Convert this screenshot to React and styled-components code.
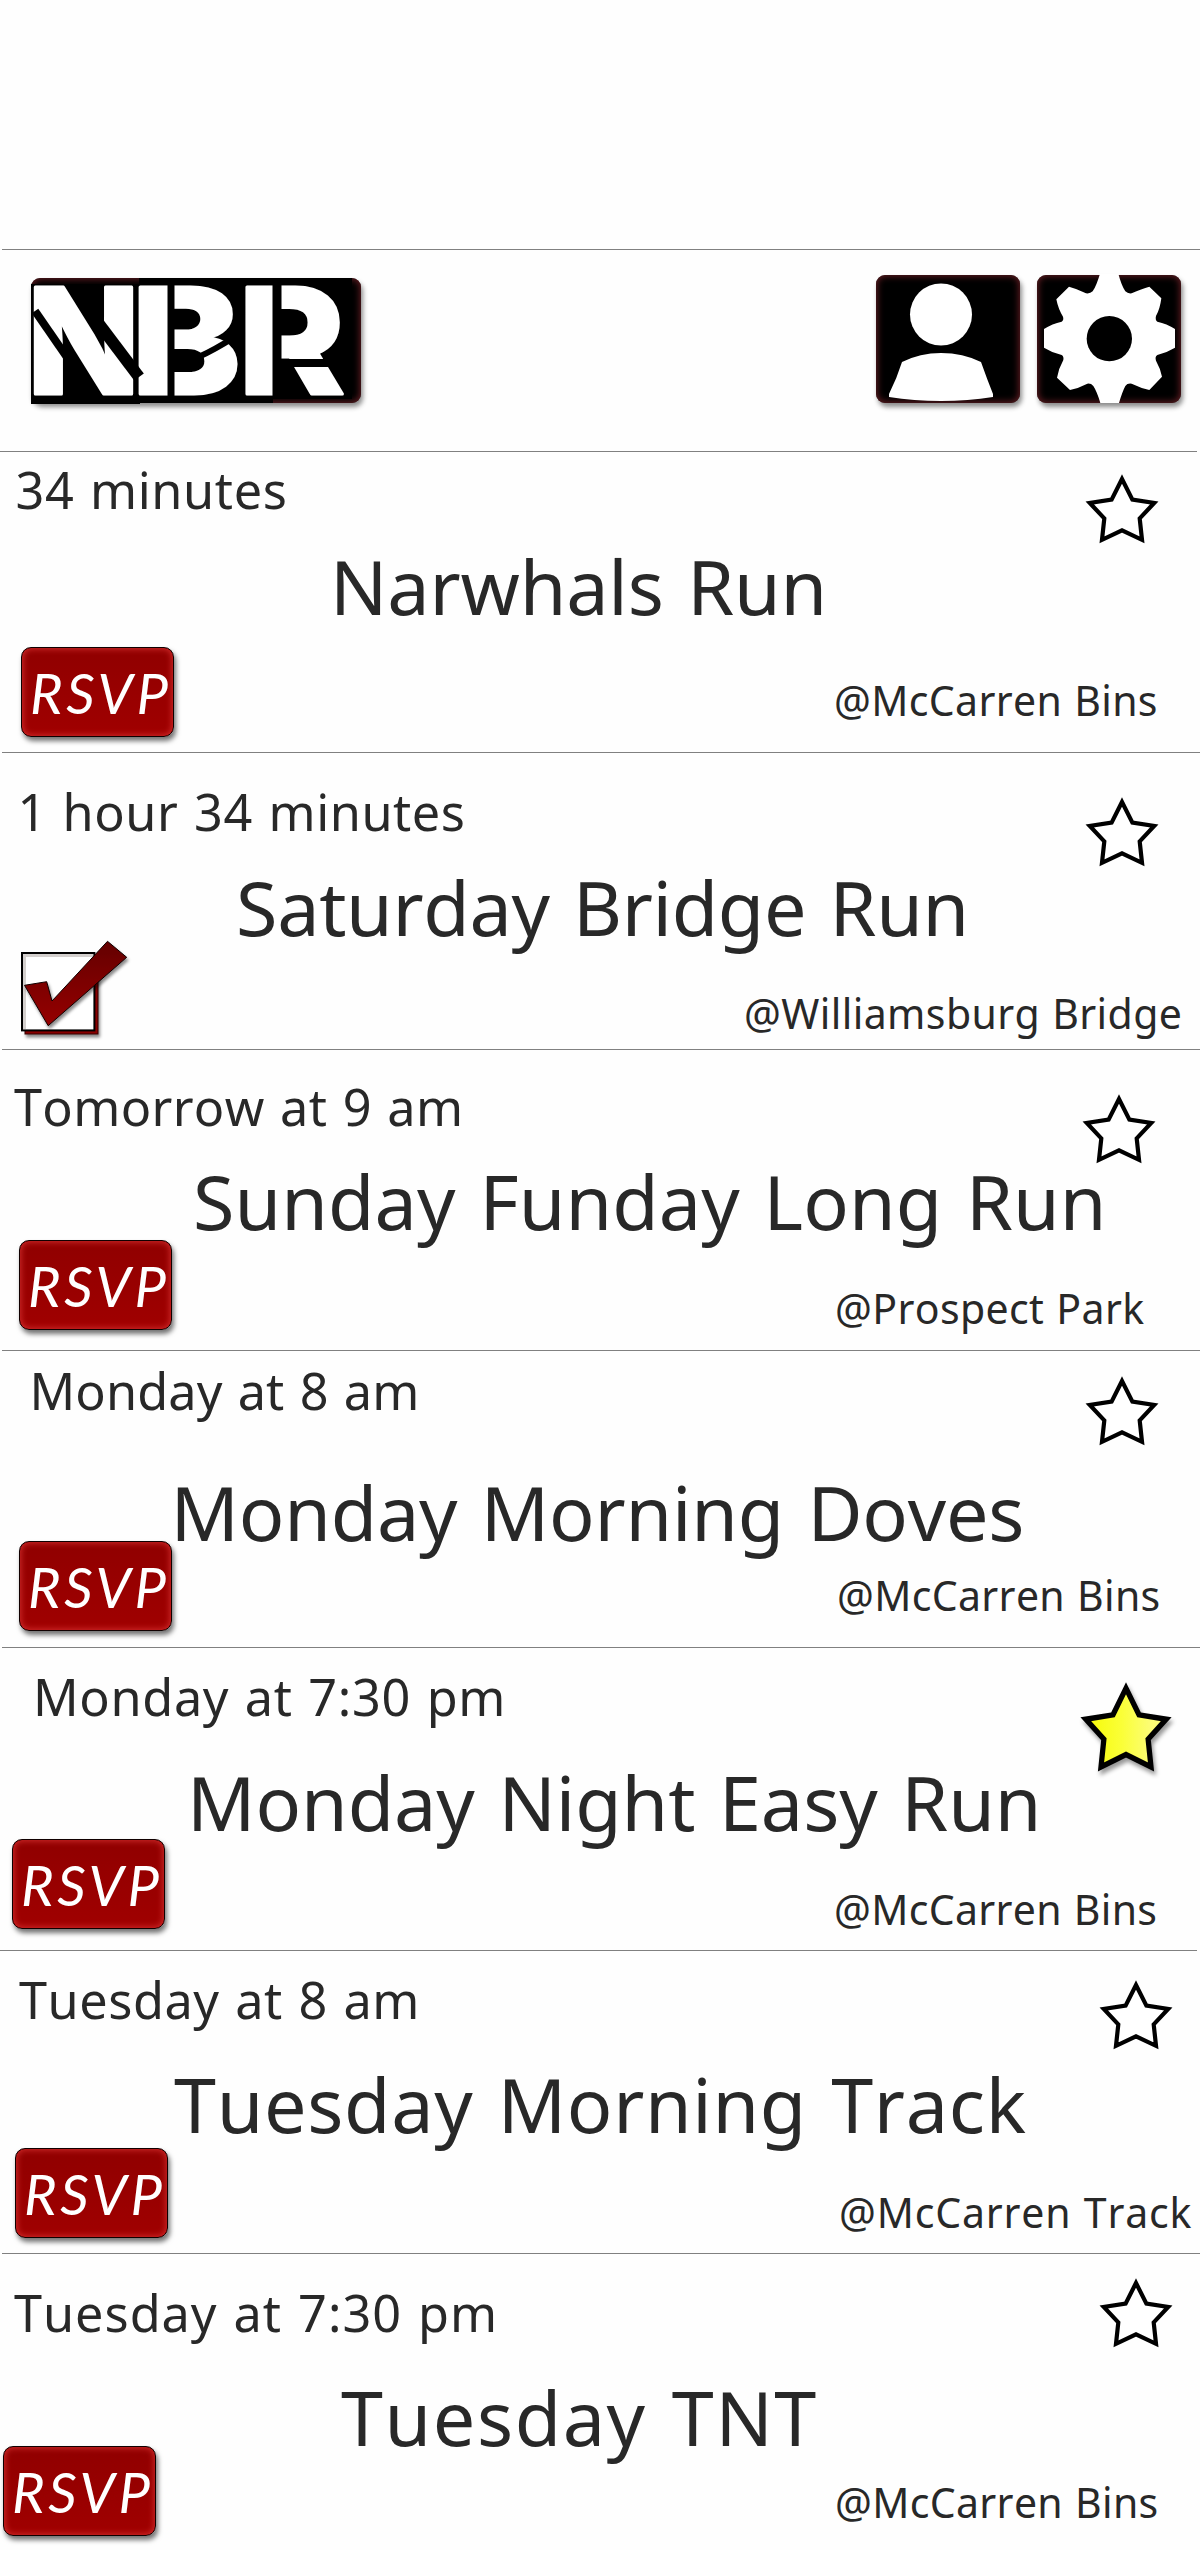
import React from "react";
import styled, { createGlobalStyle, css } from "styled-components";

const GlobalStyle = createGlobalStyle`
  body {
    margin: 0;
    background: #fefefe;
  }
`;

const ink = "#282828";

const Screen = styled.main`
  display: flex;
  flex-direction: column;
  width: 1200px;
  height: 2550px;
  overflow: hidden;
  background: #fefefe;
  color: ${ink};
  font-family: "Noto Sans", "Open Sans", sans-serif;
  font-kerning: none;
`;

const StatusSpace = styled.div`
  flex: none;
  height: 249px;
`;

const Rule = styled.hr`
  flex: none;
  width: auto;
  height: 1px;
  margin: 0 ${(p) => (p.$flush ? "3px 0 0" : "0 0 2px")};
  border: 0;
  background: #808080;
`;

const TopBar = styled.header`
  display: flex;
  flex: none;
  align-items: flex-start;
  justify-content: space-between;
  height: 201px;
  box-sizing: border-box;
  padding: 25px 19px 0 31px;
`;

const glow = css`
  box-shadow:
    inset 0 0 7px 1px #6a1f25,
    2px 4px 5px rgba(0, 0, 0, 0.45);
`;

const LogoTile = styled.div`
  width: 330px;
  height: 125px;
  margin-top: 3px;
  border-radius: 9px;
  background: #000;
  ${glow}

  svg {
    display: block;
    overflow: visible;
  }
`;

const TopActions = styled.nav`
  display: flex;
  gap: 17px;
`;

const IconTile = styled.button`
  width: 144px;
  height: 128px;
  padding: 0;
  border: 0;
  border-radius: 9px;
  background: #000;
  ${glow}

  svg {
    display: block;
    overflow: visible;
  }
`;

const EventList = styled.section`
  display: flex;
  flex-direction: column;
`;

const EventRow = styled.article`
  display: flex;
  flex: none;
  flex-direction: column;
  height: ${(p) => p.$height}px;
`;

const EventHead = styled.div`
  display: flex;
  flex: none;
  align-items: flex-start;
  justify-content: space-between;
  box-sizing: border-box;
  height: ${(p) => p.$height}px;
  padding-right: ${(p) => p.$right}px;
`;

const When = styled.time`
  margin: ${(p) => p.$top}px 0 0 ${(p) => p.$left}px;
  font-size: 50.4px;
  line-height: 60px;
  letter-spacing: ${(p) => p.$tracking}px;
  word-spacing: 2px;
  white-space: nowrap;
`;

const Favorite = styled.button`
  flex: none;
  margin: ${(p) => p.$top}px 0 0;
  padding: 0;
  border: 0;
  background: none;

  svg {
    display: block;
    overflow: visible;
    ${(p) => p.$filled && "filter: drop-shadow(2px 4px 2px rgba(0, 0, 0, 0.4));"}
  }
`;

const Title = styled.h2`
  flex: none;
  height: 60px;
  margin: 0;
  padding-left: ${(p) => p.$left}px;
  font-size: 75.5px;
  font-weight: 400;
  line-height: 60px;
  letter-spacing: ${(p) => p.$tracking}px;
  word-spacing: 4px;
  white-space: nowrap;
`;

const EventFoot = styled.div`
  display: grid;
  flex: 1;
  grid-template-columns: ${(p) => p.$split}px 1fr;
  align-items: start;
`;

const ActionSlot = styled.div`
  display: flex;
  margin: ${(p) => p.$top}px 0 0 ${(p) => p.$left}px;
`;

const Place = styled.p`
  margin: ${(p) => p.$top}px 0 0;
  font-size: 41px;
  line-height: 50px;
  letter-spacing: ${(p) => p.$tracking}px;
  word-spacing: 1px;
  white-space: nowrap;
`;

const RsvpButton = styled.button`
  width: 153px;
  height: 90px;
  box-sizing: border-box;
  padding: 2px 0 0 8px;
  border: 1px solid #100000;
  border-radius: 10px;
  background: linear-gradient(#900000, #a00000);
  box-shadow:
    inset 0 0 6px 1px #d22c2c,
    2px 4px 5px rgba(0, 0, 0, 0.55);
  color: #fff;
  font-family: "Lucida Calligraphy", Lato, sans-serif;
  font-size: 56px;
  font-style: italic;
  line-height: 84px;
  letter-spacing: 3.6px;
  text-align: left;
  white-space: nowrap;
`;

const CheckBox = styled.button`
  padding: 0;
  border: 0;
  background: none;

  svg {
    display: block;
    overflow: visible;
  }
`;

function Logo() {
  const letter = {
    y: 116,
    fill: "#fff",
    stroke: "#fff",
    strokeWidth: 3,
    strokeLinejoin: "round",
    fontFamily: "Inter, sans-serif",
    fontWeight: 800,
    fontSize: 147,
    lengthAdjust: "spacingAndGlyphs",
  };
  return (
    <LogoTile aria-label="NBR">
      <svg width="330" height="126" viewBox="0 0 330 126">
        <rect y="6" width="109" height="120" />
        <rect x="108" width="134" height="125" />
        <rect x="240" width="81" height="121" />
        <text {...letter} x="-4" textLength="113">N</text>
        <text {...letter} x="100" textLength="110">B</text>
        <text {...letter} x="207" textLength="107">R</text>
        <g stroke="#000" fill="none">
          <path d="M4 33 L42 88" strokeWidth="8" />
          <path d="M62 38 L108 99" strokeWidth="12" />
          <path d="M140 2 V124" strokeWidth="7" />
          <path d="M246 2 V120" strokeWidth="9" />
          <path d="M144 86 Q164 84 202 60" strokeWidth="6" />
          <path d="M244 85 H316" strokeWidth="8" />
        </g>
      </svg>
    </LogoTile>
  );
}

function PersonIcon() {
  return (
    <svg width="144" height="128" viewBox="0 0 144 128" fill="#fff">
      <circle cx="65" cy="39.5" r="31" />
      <path d="M26 87 Q44 78 65 78 Q87 78 105 87 Q111 104 117 119 V122 Q92 126 65 126 Q38 126 13 122 V119 Q21 103 26 87Z" />
    </svg>
  );
}

function GearIcon() {
  return (
    <svg width="144" height="128" viewBox="561 135 432 384">
      <path
        fill="#fff"
        d="M750 131 H805 Q814 165 826 184 Q834 192 845 190 Q875 176 898 170 L934 205 Q930 237 918 258 Q915 270 922 275 Q950 281 975 297 V353 Q950 368 922 375 Q914 380 918 392 Q931 415 936 440 L898 480 Q872 474 845 461 Q832 459 826 468 Q817 485 807 519 H751 Q741 485 730 468 Q722 459 712 461 Q685 475 660 480 L621 443 Q626 415 640 390 Q642 379 635 375 Q608 369 582 353 V297 Q607 281 635 275 Q642 270 639 260 Q625 238 619 208 L657 170 Q681 176 708 190 Q720 192 728 184 Q739 168 750 131Z"
      />
      <circle cx="778" cy="326" r="68" />
    </svg>
  );
}

const STAR =
  "M36 4 L46.4 24.6 L68.2 28 L53.7 43.4 L56 64.8 L36 55.3 L16 64.8 L18.3 43.4 L3.8 28 L25.6 24.6Z";

function Star({ filled }) {
  return (
    <svg width={filled ? 90 : 72} height={filled ? 88 : 68} viewBox="0 0 72 68" preserveAspectRatio="none">
      <defs>
        <linearGradient id="starFill">
          <stop offset="0.1" stopColor="#f7fb10" />
          <stop offset="0.45" stopColor="#faff38" />
          <stop offset="0.8" stopColor="#fcfd74" />
        </linearGradient>
      </defs>
      <path d={STAR} fill={filled ? "url(#starFill)" : "#fff"} stroke="#000" strokeWidth="4.2" strokeMiterlimit="10" />
    </svg>
  );
}

function CheckIcon() {
  return (
    <svg width="108" height="96" viewBox="0 0 108 96">
      <defs>
        <linearGradient id="checkFill" x2="0" y2="1">
          <stop stopColor="#640000" />
          <stop offset="1" stopColor="#960000" />
        </linearGradient>
        <filter id="checkShadow" x="-20%" y="-20%" width="150%" height="150%">
          <feDropShadow dx="1.5" dy="3" stdDeviation="1.5" floodOpacity="0.45" />
        </filter>
      </defs>
      <rect x="4" y="14.5" width="73" height="78.5" fill="#880000" stroke="#300" strokeWidth="1" filter="url(#checkShadow)" />
      <rect x="1" y="12" width="72.4" height="77.4" fill="#fff" stroke="#000" strokeWidth="2" />
      <path d="M3.5 88 V14.5 H72" fill="none" stroke="#d3cfcd" strokeWidth="3" />
      <path
        d="M3.5 44.3 L25.7 40.7 L31 60 L86.5 0.3 L105.7 16.3 L27.2 84.7Z"
        fill="url(#checkFill)"
        stroke="#100000"
        strokeWidth="1"
        filter="url(#checkShadow)"
      />
    </svg>
  );
}

// when: text, left, top, tracking. title: text, left, tracking. place: text, left, top, tracking.
// star: right, top. action: left, top.
const EVENTS = [
  { height: 300, head: 104, when: ["34 minutes", 15.5, 8.4, 0.6], star: [42, 23], title: ["Narwhals Run", 330, -0.15], action: [21, 31], place: ["@McCarren Bins", 834, 59, 0.36] },
  { height: 296, head: 124, when: ["1 hour 34 minutes", 17.5, 29.4, 0.56], star: [42, 45], title: ["Saturday Bridge Run", 236, -0.32], going: true, action: [21, 4], place: ["@Williamsburg Bridge", 744, 51, 0.4] },
  { height: 300, head: 121, when: ["Tomorrow at 9 am", 14, 27.4, 0.35], star: [45, 45], title: ["Sunday Funday Long Run", 193, 0.1], action: [19, 9], place: ["@Prospect Park", 835, 52, 0.38] },
  { height: 296, head: 131, when: ["Monday at 8 am", 29.5, 10.4, 0.12], star: [42, 26], title: ["Monday Morning Doves", 170.5, -0.2], action: [19, -1], place: ["@McCarren Bins", 837, 28, 0.34] },
  { height: 302, head: 124, flush: true, when: ["Monday at 7:30 pm", 33, 19.4, 0.64], star: [29, 35], favorite: true, title: ["Monday Night Easy Run", 187, -0.05], action: [12, 7], place: ["@McCarren Bins", 834, 52, 0.32] },
  { height: 302, head: 123, when: ["Tuesday at 8 am", 19, 19.4, 0.55], star: [28.5, 30], title: ["Tuesday Morning Track", 174, 0.67], action: [15, 14], place: ["@McCarren Track", 839, 53, 0.82] },
  { height: 296, head: 133, when: ["Tuesday at 7:30 pm", 14, 29.4, 0.98], star: [28.5, 25], title: ["Tuesday TNT", 341, 1.57], action: [3, -1], place: ["@McCarren Bins", 835, 29.5, 0.34], last: true },
];

function Event({ event }) {
  const [whenText, whenLeft, whenTop, whenTracking] = event.when;
  const [titleText, titleLeft, titleTracking] = event.title;
  const [placeText, placeLeft, placeTop, placeTracking] = event.place;
  const [starRight, starTop] = event.star;
  const [actionLeft, actionTop] = event.action;
  return (
    <EventRow $height={event.height}>
      <EventHead $height={event.head} $right={starRight}>
        <When $left={whenLeft} $top={whenTop} $tracking={whenTracking}>{whenText}</When>
        <Favorite $top={starTop} $filled={event.favorite} aria-label="Favorite">
          <Star filled={event.favorite} />
        </Favorite>
      </EventHead>
      <Title $left={titleLeft} $tracking={titleTracking}>{titleText}</Title>
      <EventFoot $split={placeLeft}>
        <ActionSlot $left={actionLeft} $top={actionTop}>
          {event.going ? (
            <CheckBox aria-label="Going"><CheckIcon /></CheckBox>
          ) : (
            <RsvpButton>RSVP</RsvpButton>
          )}
        </ActionSlot>
        <Place $top={placeTop} $tracking={placeTracking}>{placeText}</Place>
      </EventFoot>
    </EventRow>
  );
}

export default function App() {
  return (
    <Screen>
      <GlobalStyle />
      <StatusSpace />
      <Rule />
      <TopBar>
        <Logo />
        <TopActions>
          <IconTile aria-label="Profile"><PersonIcon /></IconTile>
          <IconTile aria-label="Settings"><GearIcon /></IconTile>
        </TopActions>
      </TopBar>
      <Rule $flush />
      <EventList>
        {EVENTS.map((event, i) => (
          <React.Fragment key={i}>
            <Event event={event} />
            {!event.last && <Rule $flush={event.flush} />}
          </React.Fragment>
        ))}
      </EventList>
    </Screen>
  );
}
